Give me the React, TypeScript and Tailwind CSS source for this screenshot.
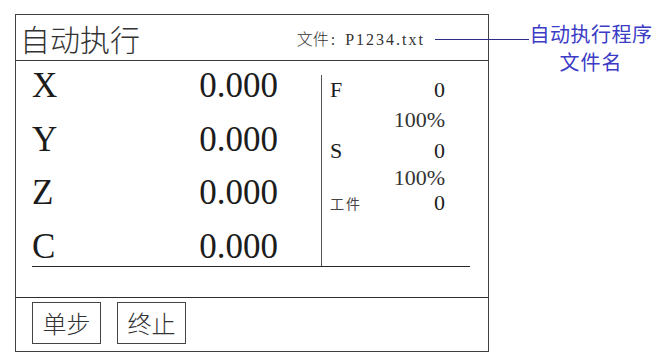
import React from "react";

const axes = ["X", "Y", "Z", "C"];

function AxisRow({ label }: { label: string }) {
    return (
        <div className="flex h-[40px] items-center justify-between pr-[43px] text-[35px] leading-[40px] text-[#1c1c1c]">
            <span>{label}</span>
            <span>0.000</span>
        </div>
    );
}

export default function App() {
    return (
        <div className="relative h-[359px] w-[657px] overflow-hidden bg-white [font-family:'Liberation_Serif','Noto_Sans_CJK_SC',serif]">
            <div className="ml-[15px] mt-[14px] flex h-[338px] w-[474px] flex-col border border-[#3f3f3f]">
                {/* header */}
                <div className="flex h-[46px] shrink-0 items-center justify-between border-b border-[#3a3a3a] pl-[4px] pr-[63px]">
                    <span className="[font-family:'Noto_Sans_CJK_SC',sans-serif] text-[30px] font-light leading-none text-[#333]">
                        自动执行
                    </span>
                    <span className="mt-[3px] flex items-baseline text-[16px] leading-none text-[#333]">
                        <span className="[font-family:'Noto_Sans_CJK_SC',sans-serif] font-light">文件</span>
                        <span className="ml-[2px]">:</span>
                        <span className="ml-[10px] tracking-[2px]">P1234.txt</span>
                    </span>
                </div>

                {/* body */}
                <div className="h-[236px] shrink-0 pl-[16px]">
                    <div className="flex h-[206px] w-[438px] border-b border-[#262626]">
                        <div className="flex w-[289px] flex-col gap-[13.5px] pt-[5px]">
                            {axes.map((a) => (
                                <AxisRow key={a} label={a} />
                            ))}
                        </div>
                        <div className="mt-[14px] flex w-[149px] flex-col border-l border-[#555] pl-[8px] pr-[25px] text-[22px] text-[#1c1c1c]">
                            <div className="flex h-[29px] items-center justify-between leading-[29px]">
                                <span>F</span>
                                <span>0</span>
                            </div>
                            <div className="flex h-[31px] items-center justify-end leading-[31px] text-[#333]">100%</div>
                            <div className="flex h-[31px] items-center justify-between leading-[31px]">
                                <span>S</span>
                                <span>0</span>
                            </div>
                            <div className="flex h-[23px] items-center justify-end leading-[23px] text-[#333]">100%</div>
                            <div className="flex h-[28px] items-center justify-between leading-[28px]">
                                <span className="[font-family:'Noto_Sans_CJK_SC',sans-serif] text-[14px] tracking-[2px] text-[#444]">
                                    工件
                                </span>
                                <span>0</span>
                            </div>
                        </div>
                    </div>
                </div>

                {/* footer */}
                <div className="flex flex-1 gap-[16px] border-t border-[#2e2e2e] pl-[16px] pt-[4px]">
                    {["单步", "终止"].map((b) => (
                        <button
                            key={b}
                            className="flex h-[42px] w-[69px] items-center justify-center border border-[#444] [font-family:'Noto_Sans_CJK_SC',sans-serif] text-[24px] font-light leading-none text-[#333]"
                        >
                            {b}
                        </button>
                    ))}
                </div>
            </div>

            {/* annotation callout */}
            <div className="absolute left-[435px] top-[39px] h-px w-[94px] bg-[#2d2d86]" />
            <div className="absolute left-[529px] top-[20px] w-[124px] text-center [font-family:'Noto_Sans_CJK_SC',sans-serif] text-[20px] leading-[28px] text-[#3b3bc6]">
                <div className="tracking-[0.5px]">自动执行程序</div>
                <div className="tracking-[1px]">文件名</div>
            </div>
        </div>
    );
}
